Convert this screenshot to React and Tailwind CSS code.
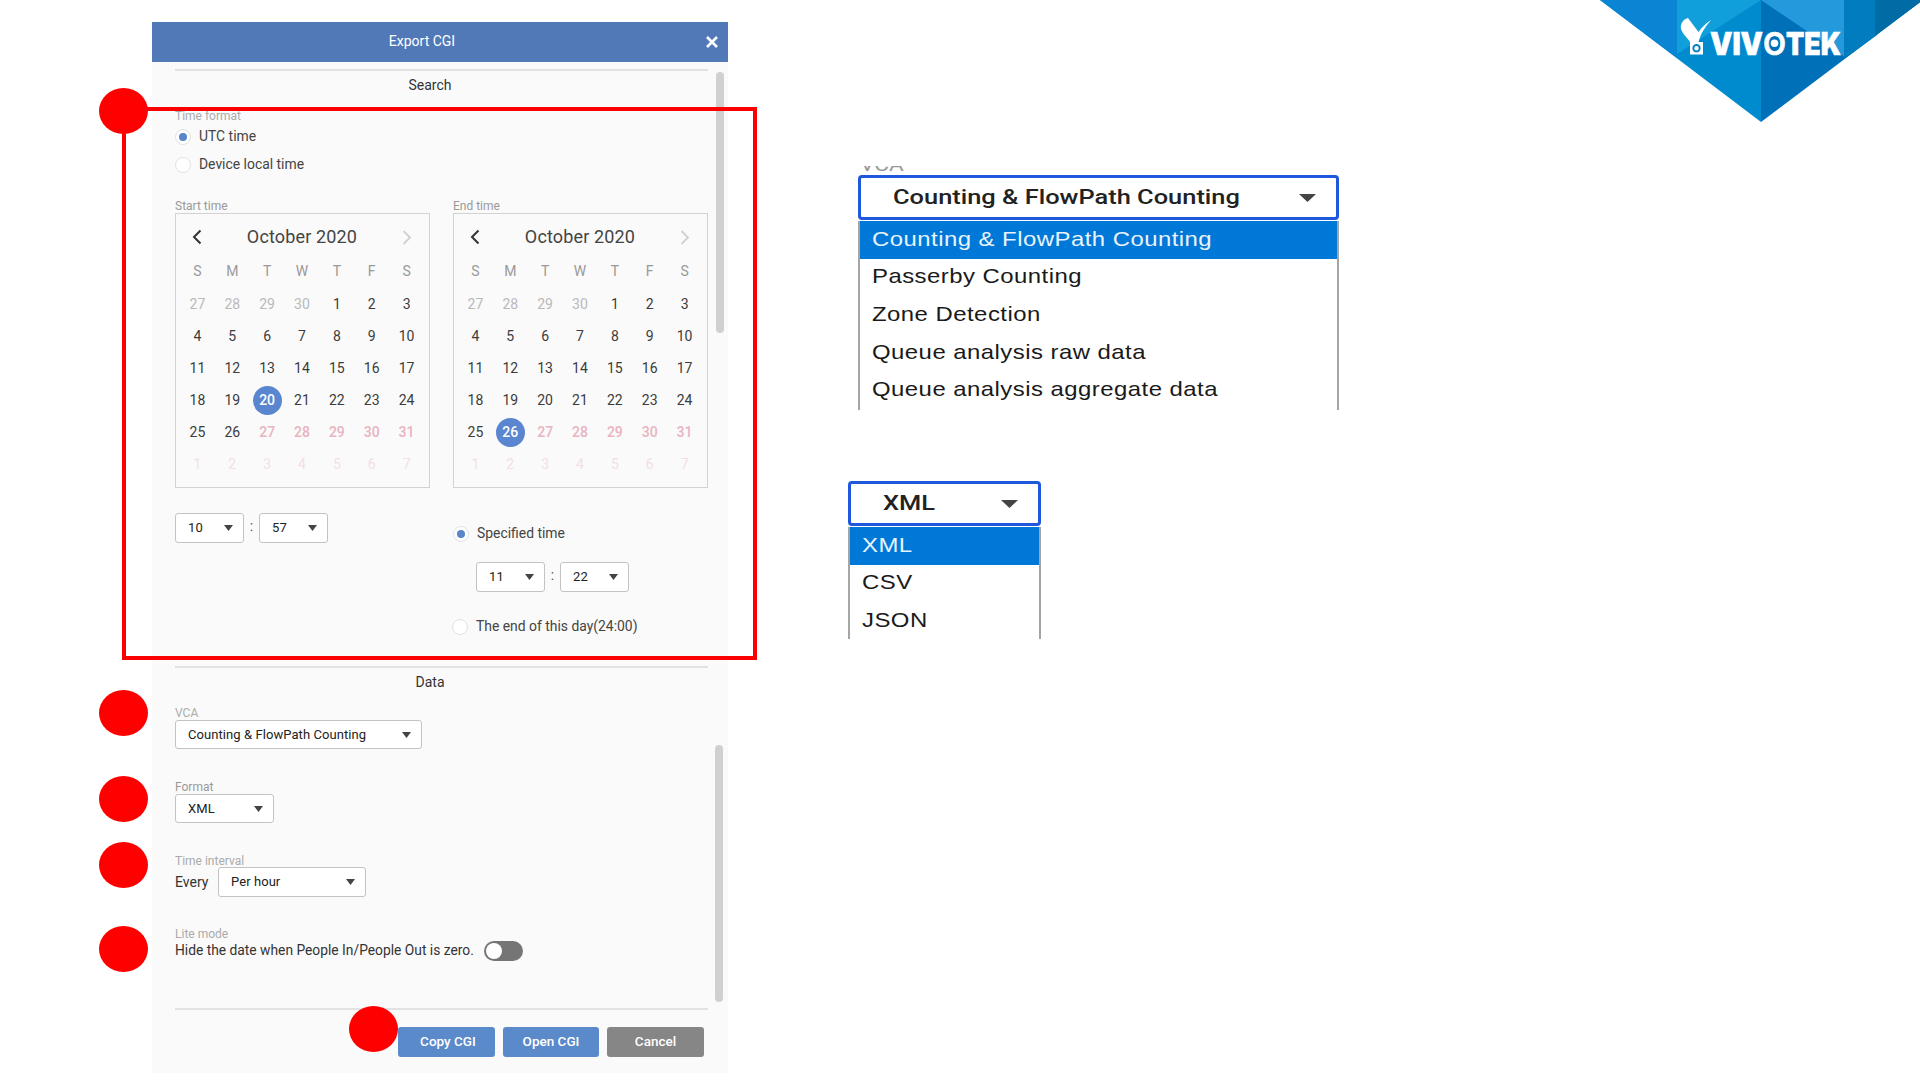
import clsx from 'clsx';

const WEEKDAYS = ['S', 'M', 'T', 'W', 'T', 'F', 'S'];

// October 2020, padded with the days around it
const DAYS = [
  ...[27, 28, 29, 30].map((day) => ({ day, kind: 'prev' })),
  ...Array.from({ length: 26 }, (_, i) => ({ day: i + 1, kind: 'normal' })),
  ...[27, 28, 29, 30, 31].map((day) => ({ day, kind: 'future' })),
  ...[1, 2, 3, 4, 5, 6, 7].map((day) => ({ day, kind: 'next' })),
];

const DAY_COLORS = {
  prev: 'text-[#b9b9b9]',
  normal: 'text-[#3c3c3c]',
  future: 'text-[#e9b3c0] font-medium',
  next: 'text-[#f3dfe4]',
};

function Calendar({ label, selected }) {
  return (
    <div className="w-[255px]">
      <div className="h-4 text-xs leading-[18px] text-[#999]">{label}</div>
      <div className="h-[275px] border border-[#d2d2d2] px-[5px] pt-[3px]">
        <div className="flex h-10 items-center justify-between pr-[12px] pl-[11px] text-[#333]">
          <svg width="10" height="16" viewBox="0 0 10 16" fill="none" stroke="currentColor" strokeWidth="2">
            <path d="M8.5 1.5 2 8l6.500 6.500" />
          </svg>
          <span className="text-lg tracking-[0.15px] text-[#444]">October 2020</span>
          <svg width="10" height="16" viewBox="0 0 10 16" fill="none" stroke="#d0d0d0" strokeWidth="1.800">
            <path d="M1.500 2 8 8.500 1.500 15" />
          </svg>
        </div>
        <div className="-ml-px grid h-7 grid-cols-7 items-center text-center text-sm text-[#999]">
          {WEEKDAYS.map((name, i) => (
            <span key={i}>{name}</span>
          ))}
        </div>
        <div className="mt-[3px] -ml-px grid auto-rows-[32px] grid-cols-7 text-sm">
          {DAYS.map(({ day, kind }, i) => (
            <div key={i} className={clsx('flex items-center justify-center', DAY_COLORS[kind])}>
              {kind === 'normal' && day === selected ? (
                <span className="flex size-[29px] shrink-0 items-center justify-center rounded-full bg-[#5986cf] font-medium text-white">
                  {day}
                </span>
              ) : (
                day
              )}
            </div>
          ))}
        </div>
      </div>
    </div>
  );
}

function Caret({ className }) {
  return (
    <svg className={className} viewBox="0 0 10 6" preserveAspectRatio="none" fill="#444">
      <path d="M0 0h10L5 6z" />
    </svg>
  );
}

function Select({ value, className }) {
  return (
    <div
      className={clsx(
        'flex items-center justify-between rounded-[3px] border border-[#c3c3c3] bg-white pr-[10px] pl-3 text-[13px] text-[#222]',
        className,
      )}
    >
      <span className="tracking-[0.07px]">{value}</span>
      <Caret className="h-[6px] w-[9px]" />
    </div>
  );
}

function TimeSelect({ hour, minute }) {
  return (
    <div className="flex">
      <Select value={hour} className="h-[30px] w-[69px]" />
      <span className="w-[15px] text-center text-sm leading-[27px] text-[#555]">:</span>
      <Select value={minute} className="h-[30px] w-[69px]" />
    </div>
  );
}

function Radio({ label, checked, className }) {
  return (
    <div className={clsx('flex items-center text-[13.9px] text-[#444]', className)}>
      <span className="mr-2 flex size-4 items-center justify-center rounded-full border border-[#e2e2e2] bg-white">
        {checked && <span className="size-2 rounded-full bg-[#5986c8]" />}
      </span>
      <span className="pb-0.5">{label}</span>
    </div>
  );
}

function Divider({ className }) {
  return <div className={clsx('h-[2px] w-[533px] bg-[#e2e2e2]', className)} />;
}

function SectionTitle({ children }) {
  return <div className="mt-1 h-5 w-[510px] text-center text-sm leading-5 text-[#333]">{children}</div>;
}

function ExportDialog() {
  return (
    <section className="relative mt-[22px] ml-[152px] h-[1051px] w-[576px] bg-[#fafafa] font-[Roboto,sans-serif]">
      <header className="flex h-10 items-center bg-[#5179b7] text-sm text-white">
        <span className="ml-[34px] w-[472px] pb-0.5 text-center">Export CGI</span>
        <svg className="ml-[48px]" width="12" height="12" viewBox="0 0 12 12" stroke="#fff" strokeWidth="2.600">
          <path d="M1 1l10 10M11 1L1 11" />
        </svg>
      </header>

      <div className="pt-[7px] pl-[23px]">
        <Divider />
        <SectionTitle>Search</SectionTitle>
        <div className="mt-[13px] h-[15px] text-xs leading-[17px] text-[#aaa]">Time format</div>
        <Radio label="UTC time" checked className="h-7" />
        <Radio label="Device local time" className="h-7" />

        <div className="mt-[18px] flex gap-[23px]">
          <Calendar label="Start time" selected={20} />
          <Calendar label="End time" selected={26} />
        </div>

        <div className="flex gap-[23px]">
          <div className="w-[255px] pt-[25px]">
            <TimeSelect hour="10" minute="57" />
          </div>
          <div className="pt-[36px]">
            <Radio label="Specified time" checked className="h-5" />
            <div className="mt-[18px] pl-[23px]">
              <TimeSelect hour="11" minute="22" />
            </div>
            <Radio label="The end of this day(24:00)" className="mt-[25px] -ml-px h-5" />
          </div>
        </div>

        <Divider className="mt-[29px]" />
        <SectionTitle>Data</SectionTitle>

        <div className="mt-[13px] h-[15px] text-xs leading-[17px] text-[#aaa]">VCA</div>
        <Select value="Counting & FlowPath Counting" className="h-[29px] w-[247px]" />

        <div className="mt-[30px] h-[15px] text-xs leading-[17px] text-[#999]">Format</div>
        <Select value="XML" className="h-[29px] w-[99px]" />

        <div className="mt-[30px] h-[14px] text-xs leading-[17px] text-[#aaa]">Time interval</div>
        <div className="flex items-center text-sm text-[#333]">
          <span className="w-[43px]">Every</span>
          <Select value="Per hour" className="h-[30px] w-[148px]" />
        </div>

        <div className="mt-[29px] h-4 text-xs leading-[17px] text-[#aaa]">Lite mode</div>
        <div className="flex h-[18px] items-center text-[13.8px] text-[#333]">
          <span className="w-[309px] pb-0.5 whitespace-nowrap">Hide the date when People In/People Out is zero.</span>
          <span className="flex h-5 w-[39px] items-center rounded-full bg-[#757575] pl-[2px]">
            <span className="size-4 rounded-full bg-white" />
          </span>
        </div>

        <Divider className="mt-[48px]" />
        <div className="mt-[17px] flex gap-2 pl-[223px] text-[13.5px] font-medium text-white">
          <button className="h-[30px] w-[97px] rounded-[3px] bg-[#5b8acb] pb-px pl-[3px]">Copy CGI</button>
          <button className="h-[30px] w-[96px] rounded-[3px] bg-[#5b8acb] pb-px">Open CGI</button>
          <button className="h-[30px] w-[97px] rounded-[3px] bg-[#868686] pb-px">Cancel</button>
        </div>
      </div>

      {/* scrollbars */}
      <div className="absolute top-[50px] left-[564px] h-[261px] w-2 rounded-full bg-[#d0d0d0]" />
      <div className="absolute top-[723px] left-[563px] h-[257px] w-2 rounded-full bg-[#d0d0d0]" />
    </section>
  );
}

function OpenSelect({ value, options, className, listClass }) {
  return (
    <div className={className}>
      <div className="flex h-[45px] items-center justify-between rounded-[4px] border-[3px] border-[#1f57dd] bg-white pt-px pr-[20px] pl-[32px] font-[Roboto,sans-serif] text-[21px] text-[#222]">
        <span className="origin-left scale-x-[1.210] font-medium whitespace-nowrap">{value}</span>
        <Caret className="h-[8px] w-[17px]" />
      </div>
      <ul
        className={clsx(
          "border-x-2 border-[#a5a5a5] font-['Liberation_Sans',Arial,sans-serif] text-[21px] text-[#1a1a1a]",
          listClass,
        )}
      >
        {options.map((option, i) => (
          <li
            key={option}
            className={clsx('flex h-[37.7px] items-center pb-[3px] pl-[12px]', i === 0 && 'mt-px bg-[#0078d7] text-[#e8f3fc]')}
          >
            <span className="origin-left scale-x-[1.140] tracking-[0.4px] whitespace-nowrap">{option}</span>
          </li>
        ))}
      </ul>
    </div>
  );
}

function Logo() {
  return (
    <svg className="ml-auto" width="321" height="124" viewBox="1599 0 321 124">
      <path d="M1600 0h161v122z" fill="#008bcf" />
      <path d="M1600 0h77v58z" fill="#0a85d3" />
      <path d="M1677 0h84l-84 54z" fill="#109fdb" />
      <path d="M1761 0h162l-162 122z" fill="#0071b8" />
      <path d="M1761 0h84v57z" fill="#2499dc" />
      <path d="M1844 0h33v35l-33 24z" fill="#007cbf" />
      <path d="M1875 0h48l-48 36z" fill="#006ba5" />
      <g fill="#fff">
        <path d="M1681 29c-1-6 3-10 7-11l10.500 14c3-4.500 7-8.500 12.500-12-4 5-9 11-11.500 19l-1 3h-8.500c-2-4-7-7-9-13z" />
        <path d="M1690 42h13v12.500h-13z" />
        <text y="54.500" fontFamily="Inter, sans-serif" fontWeight="900" fontSize="31" stroke="#fff" strokeWidth=".6">
          <tspan x="1710" textLength="53" lengthAdjust="spacingAndGlyphs">VIV</tspan>
          <tspan x="1763" fontWeight="600" textLength="23" lengthAdjust="spacingAndGlyphs">O</tspan>
          <tspan x="1786" textLength="55" lengthAdjust="spacingAndGlyphs">TEK</tspan>
        </text>
        <circle cx="1774.500" cy="43.300" r="3.800" />
      </g>
      <circle cx="1696.500" cy="48.200" r="3.200" fill="none" stroke="#0080c8" strokeWidth="1.900" />
    </svg>
  );
}

const MARKERS = [
  'top-[88px] left-[99px]',
  'top-[690px] left-[99px]',
  'top-[776px] left-[99px]',
  'top-[842px] left-[99px]',
  'top-[926px] left-[99px]',
  'top-[1006px] left-[349px]',
];

export default function App() {
  return (
    <main className="relative flex h-[1080px] w-[1920px] items-start overflow-hidden bg-white">
      <ExportDialog />

      <div className="ml-[120px] w-[492px] pt-[166px]">
        <div className="ml-[12px] flex h-[6px] items-end overflow-hidden font-[Roboto,sans-serif] text-[18px] text-[#999]">
          <span className="origin-left scale-x-[1.260] leading-[14px]">VCA</span>
        </div>
        <OpenSelect
          className="mt-[3px] ml-[10px] w-[481px]"
          listClass="h-[189px]"
          value="Counting & FlowPath Counting"
          options={[
            'Counting & FlowPath Counting',
            'Passerby Counting',
            'Zone Detection',
            'Queue analysis raw data',
            'Queue analysis aggregate data',
          ]}
        />
        <OpenSelect
          className="mt-[71px] w-[193px]"
          listClass="h-[112px]"
          value="XML"
          options={['XML', 'CSV', 'JSON']}
        />
      </div>

      <Logo />

      {/* callouts drawn over the dialog */}
      <div className="absolute top-[107px] left-[122px] h-[553px] w-[635px] border-4 border-[#fb0000]" />
      {MARKERS.map((position) => (
        <div key={position} className={clsx('absolute h-[46px] w-[49px] rounded-[50%] bg-[#ff0000]', position)} />
      ))}
    </main>
  );
}
